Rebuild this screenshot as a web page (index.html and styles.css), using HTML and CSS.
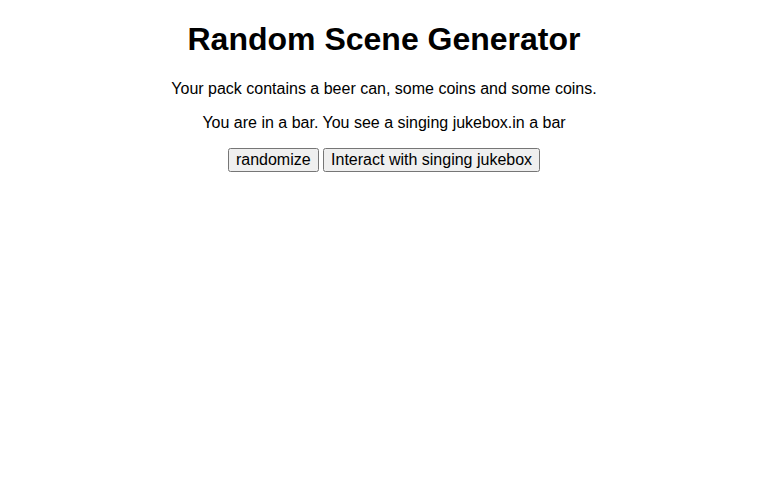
FILE: index.html
```html
<!DOCTYPE html>
<html>
<head>
    <title>Random Scene Generator</title>
    <link rel="stylesheet" href="styles.css">
</head>
<body>
    <div id="app">
        <h1>Random Scene Generator</h1>
        <p id="inventory">Your pack contains a beer can, some coins and some coins.</p>
        <p id="scene">You are in a bar. You see a singing jukebox.in a bar</p>
        <div id="actions">
            <button type="button" id="randomize">randomize</button>
            <button type="button" class="interact">Interact with singing jukebox</button>
        </div>
    </div>
</body>
</html>
```

FILE: styles.css
```css
body {
    margin: 0 8px;
    font-family: "Liberation Sans", Arial, sans-serif;
    color: #000;
    background-color: #fff;
}

#app {
    text-align: center;
}

button {
    font-family: "Liberation Sans", Arial, sans-serif;
    font-size: 16px;
}
```
